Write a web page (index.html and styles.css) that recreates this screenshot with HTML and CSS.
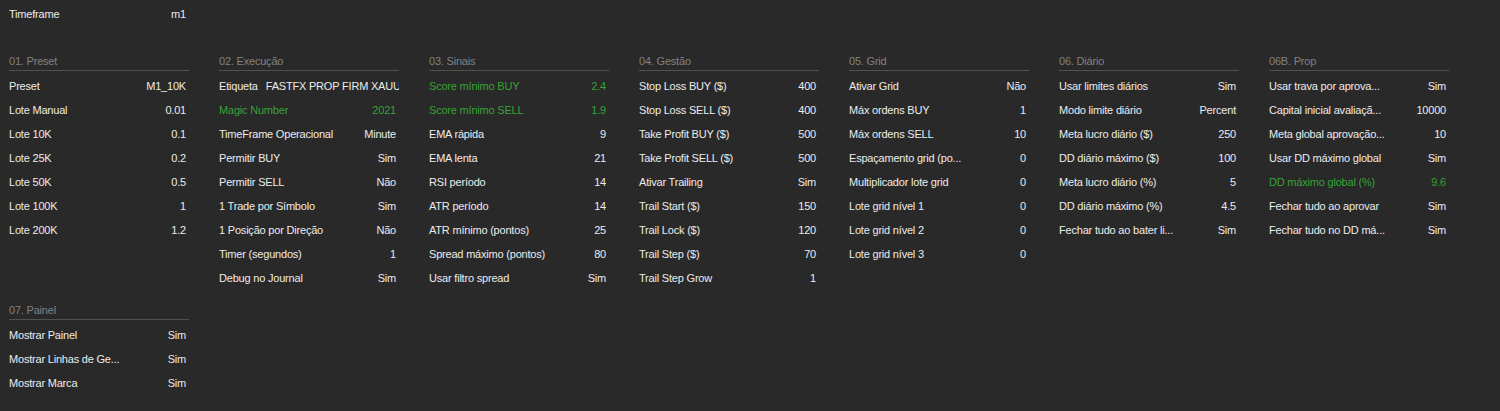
FILE: index.html
```html
<!DOCTYPE html>
<html lang="pt">
<head>
<meta charset="utf-8">
<link rel="stylesheet" href="styles.css">
</head>
<body>
<div class="page">
  <div class="row top"><span class="label">Timeframe</span><span class="value">m1</span></div>
  <div class="grid">
    <section class="sec">
      <div class="head">01. Preset</div>
      <div class="rows">
        <div class="row"><span class="label">Preset</span><span class="value">M1_10K</span></div>
        <div class="row"><span class="label">Lote Manual</span><span class="value">0.01</span></div>
        <div class="row"><span class="label">Lote 10K</span><span class="value">0.1</span></div>
        <div class="row"><span class="label">Lote 25K</span><span class="value">0.2</span></div>
        <div class="row"><span class="label">Lote 50K</span><span class="value">0.5</span></div>
        <div class="row"><span class="label">Lote 100K</span><span class="value">1</span></div>
        <div class="row"><span class="label">Lote 200K</span><span class="value">1.2</span></div>
      </div>
    </section>
    <section class="sec">
      <div class="head">02. Execução</div>
      <div class="rows">
        <div class="row"><span class="label">Etiqueta</span><span class="value">FASTFX PROP FIRM XAUUSD</span></div>
        <div class="row hl"><span class="label">Magic Number</span><span class="value">2021</span></div>
        <div class="row"><span class="label">TimeFrame Operacional</span><span class="value">Minute</span></div>
        <div class="row"><span class="label">Permitir BUY</span><span class="value">Sim</span></div>
        <div class="row"><span class="label">Permitir SELL</span><span class="value">Não</span></div>
        <div class="row"><span class="label">1 Trade por Símbolo</span><span class="value">Sim</span></div>
        <div class="row"><span class="label">1 Posição por Direção</span><span class="value">Não</span></div>
        <div class="row"><span class="label">Timer (segundos)</span><span class="value">1</span></div>
        <div class="row"><span class="label">Debug no Journal</span><span class="value">Sim</span></div>
      </div>
    </section>
    <section class="sec">
      <div class="head">03. Sinais</div>
      <div class="rows">
        <div class="row hl"><span class="label">Score mínimo BUY</span><span class="value">2.4</span></div>
        <div class="row hl"><span class="label">Score mínimo SELL</span><span class="value">1.9</span></div>
        <div class="row"><span class="label">EMA rápida</span><span class="value">9</span></div>
        <div class="row"><span class="label">EMA lenta</span><span class="value">21</span></div>
        <div class="row"><span class="label">RSI período</span><span class="value">14</span></div>
        <div class="row"><span class="label">ATR período</span><span class="value">14</span></div>
        <div class="row"><span class="label">ATR mínimo (pontos)</span><span class="value">25</span></div>
        <div class="row"><span class="label">Spread máximo (pontos)</span><span class="value">80</span></div>
        <div class="row"><span class="label">Usar filtro spread</span><span class="value">Sim</span></div>
      </div>
    </section>
    <section class="sec">
      <div class="head">04. Gestão</div>
      <div class="rows">
        <div class="row"><span class="label">Stop Loss BUY ($)</span><span class="value">400</span></div>
        <div class="row"><span class="label">Stop Loss SELL ($)</span><span class="value">400</span></div>
        <div class="row"><span class="label">Take Profit BUY ($)</span><span class="value">500</span></div>
        <div class="row"><span class="label">Take Profit SELL ($)</span><span class="value">500</span></div>
        <div class="row"><span class="label">Ativar Trailing</span><span class="value">Sim</span></div>
        <div class="row"><span class="label">Trail Start ($)</span><span class="value">150</span></div>
        <div class="row"><span class="label">Trail Lock ($)</span><span class="value">120</span></div>
        <div class="row"><span class="label">Trail Step ($)</span><span class="value">70</span></div>
        <div class="row"><span class="label">Trail Step Grow</span><span class="value">1</span></div>
      </div>
    </section>
    <section class="sec">
      <div class="head">05. Grid</div>
      <div class="rows">
        <div class="row"><span class="label">Ativar Grid</span><span class="value">Não</span></div>
        <div class="row"><span class="label">Máx ordens BUY</span><span class="value">1</span></div>
        <div class="row"><span class="label">Máx ordens SELL</span><span class="value">10</span></div>
        <div class="row"><span class="label">Espaçamento grid (po...</span><span class="value">0</span></div>
        <div class="row"><span class="label">Multiplicador lote grid</span><span class="value">0</span></div>
        <div class="row"><span class="label">Lote grid nível 1</span><span class="value">0</span></div>
        <div class="row"><span class="label">Lote grid nível 2</span><span class="value">0</span></div>
        <div class="row"><span class="label">Lote grid nível 3</span><span class="value">0</span></div>
      </div>
    </section>
    <section class="sec">
      <div class="head">06. Diário</div>
      <div class="rows">
        <div class="row"><span class="label">Usar limites diários</span><span class="value">Sim</span></div>
        <div class="row"><span class="label">Modo limite diário</span><span class="value">Percent</span></div>
        <div class="row"><span class="label">Meta lucro diário ($)</span><span class="value">250</span></div>
        <div class="row"><span class="label">DD diário máximo ($)</span><span class="value">100</span></div>
        <div class="row"><span class="label">Meta lucro diário (%)</span><span class="value">5</span></div>
        <div class="row"><span class="label">DD diário máximo (%)</span><span class="value">4.5</span></div>
        <div class="row"><span class="label">Fechar tudo ao bater li...</span><span class="value">Sim</span></div>
      </div>
    </section>
    <section class="sec">
      <div class="head">06B. Prop</div>
      <div class="rows">
        <div class="row"><span class="label">Usar trava por aprova...</span><span class="value">Sim</span></div>
        <div class="row"><span class="label">Capital inicial avaliaçã...</span><span class="value">10000</span></div>
        <div class="row"><span class="label">Meta global aprovação...</span><span class="value">10</span></div>
        <div class="row"><span class="label">Usar DD máximo global</span><span class="value">Sim</span></div>
        <div class="row hl"><span class="label">DD máximo global (%)</span><span class="value">9.6</span></div>
        <div class="row"><span class="label">Fechar tudo ao aprovar</span><span class="value">Sim</span></div>
        <div class="row"><span class="label">Fechar tudo no DD má...</span><span class="value">Sim</span></div>
      </div>
    </section>
    <section class="sec">
      <div class="head">07. Painel</div>
      <div class="rows">
        <div class="row"><span class="label">Mostrar Painel</span><span class="value">Sim</span></div>
        <div class="row"><span class="label">Mostrar Linhas de Ge...</span><span class="value">Sim</span></div>
        <div class="row"><span class="label">Mostrar Marca</span><span class="value">Sim</span></div>
      </div>
    </section>
  </div>
</div>
</body>
</html>
```
FILE: styles.css
```css
html, body {
  margin: 0;
  padding: 0;
  background: #292929;
}
body {
  width: 1500px;
  height: 411px;
  overflow: hidden;
  font-family: "Liberation Sans", Arial, sans-serif;
  font-size: 11px;
  letter-spacing: -0.2px;
  color: #ececec;
}
.page {
  padding: 2px 0 0 9px;
}
.top {
  width: 180px;
  margin-bottom: 26px;
}
.grid {
  display: grid;
  grid-template-columns: repeat(7, 180px);
  column-gap: 30px;
  row-gap: 11px;
  align-items: start;
}
.head {
  height: 18px;
  line-height: 18px;
  color: #828282;
  border-bottom: 1px solid #505050;
}
.rows {
  margin-top: 3px;
}
.row {
  display: flex;
  height: 24px;
  line-height: 24px;
  white-space: nowrap;
  gap: 8px;
}
.label {
  flex: 0 0 auto;
}
.value {
  flex: 1 1 auto;
  min-width: 0;
  overflow: hidden;
  padding-right: 3px;
  text-align: right;
}
.hl {
  color: #36a336;
}
```
